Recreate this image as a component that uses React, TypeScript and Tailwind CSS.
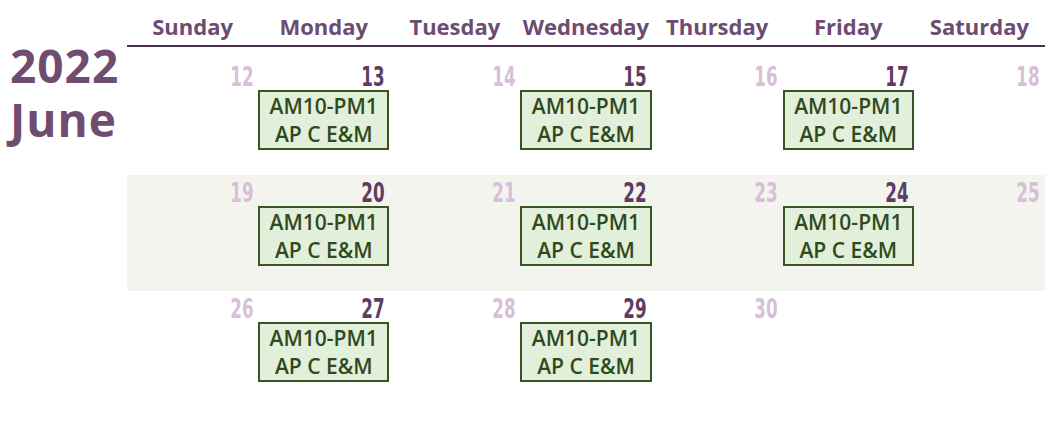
import React from "react";

const days = ["Sunday", "Monday", "Tuesday", "Wednesday", "Thursday", "Friday", "Saturday"];

// null = empty cell; event days are Mon/Wed/Fri
const weeks: (number | null)[][] = [
  [12, 13, 14, 15, 16, 17, 18],
  [19, 20, 21, 22, 23, 24, 25],
  [26, 27, 28, 29, 30, null, null],
];

const hasEvent = (col: number) => col === 1 || col === 3 || col === 5;

function EventBox() {
  return (
    <div className="h-[60px] border-2 border-[#375623] bg-[#e2efda] text-[#2f4a1c] text-[21px] font-semibold leading-[28px] text-center flex flex-col justify-center font-['Open_Sans',sans-serif]">
      <div>AM10-PM1</div>
      <div>AP C E&amp;M</div>
    </div>
  );
}

function DayCell({ day, col }: { day: number | null; col: number }) {
  if (day === null) return <div />;
  const active = hasEvent(col);
  return (
    <div className="flex flex-col">
      <div
        className={
          "h-[28px] pr-[5px] text-right text-[27px] leading-[29px] font-bold font-['DejaVu_Sans',sans-serif] " +
          (active ? "text-[#5e3d62]" : "text-[#d8bfd8]")
        }
      >
        <span className="inline-block scale-x-[0.62] origin-right">{day}</span>
      </div>
      {active && <EventBox />}
    </div>
  );
}

export default function App() {
  return (
    <div className="w-[1051px] h-[424px] bg-white flex font-['Open_Sans',sans-serif]">
      <div className="w-[127px] shrink-0 pt-[38px] pl-[10px] text-[#704c70] font-bold text-[46px] leading-[54px] tracking-[1px]">
        <div>2022</div>
        <div>June</div>
      </div>

      <div className="w-[918px] flex flex-col">
        <div className="h-[47px] border-b-2 border-[#4b3150] grid grid-cols-7 items-center pt-[8px]">
          {days.map((d) => (
            <div key={d} className="text-center text-[22px] font-bold text-[#6e4b71]">
              {d}
            </div>
          ))}
        </div>

        <div className="mt-[12px] flex flex-col">
          {weeks.map((w, i) => (
            <div
              key={i}
              className={
                "grid grid-cols-7 h-[116px] pt-[3px] " + (i === 1 ? "bg-[#f3f4ee]" : "")
              }
            >
              {w.map((d, c) => (
                <DayCell key={c} day={d} col={c} />
              ))}
            </div>
          ))}
        </div>
      </div>
    </div>
  );
}
